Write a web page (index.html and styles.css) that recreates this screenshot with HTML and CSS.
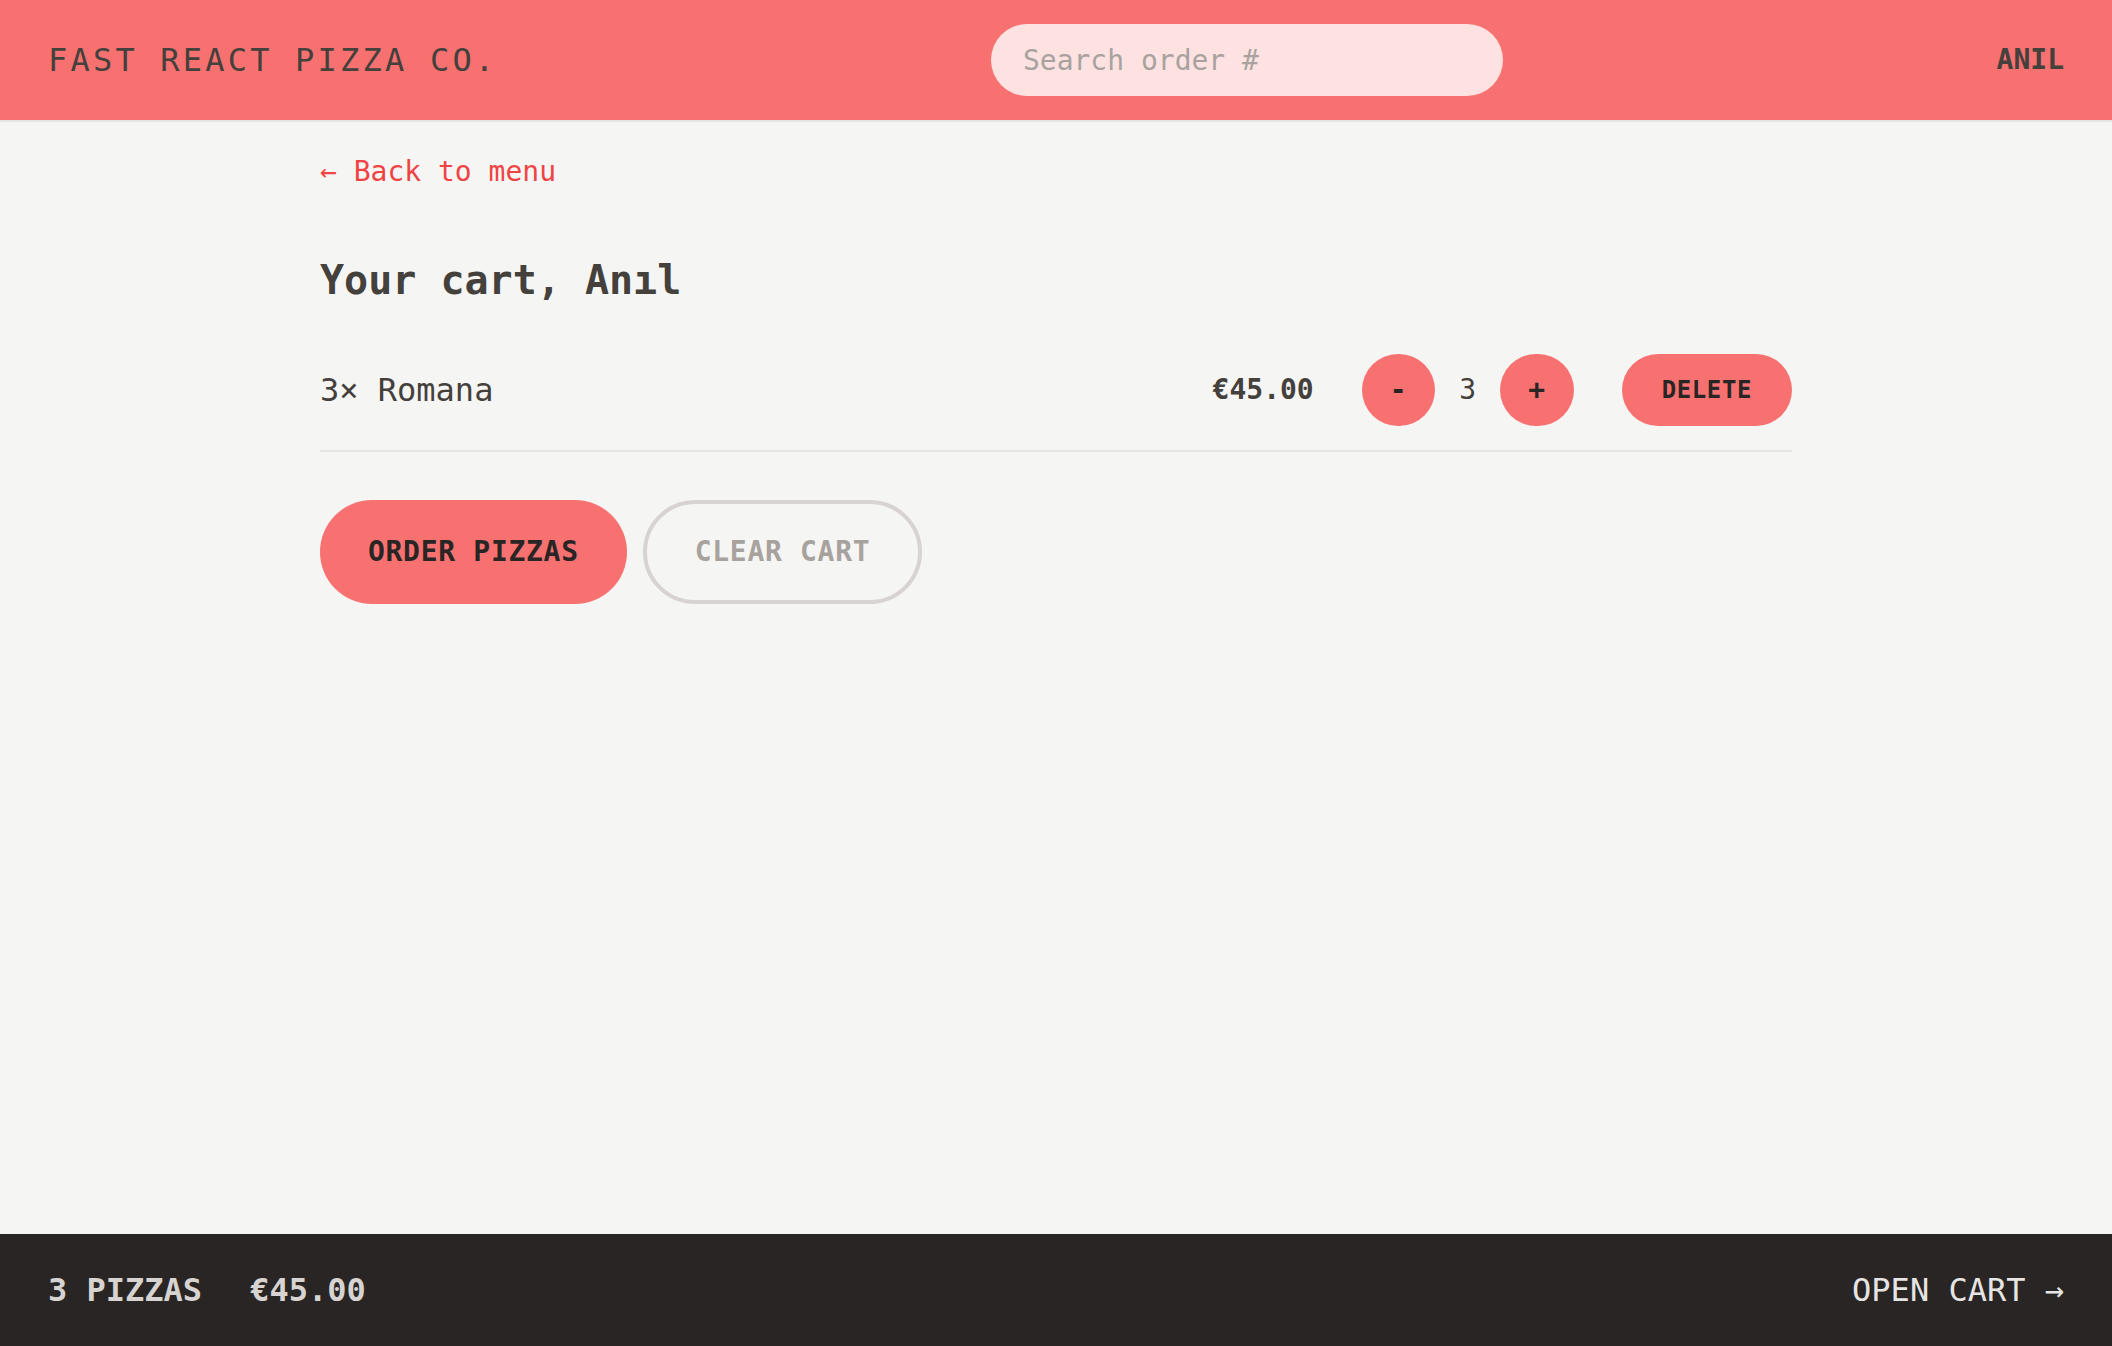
FILE: index.html
```html
<!DOCTYPE html>
<html lang="en">
<head>
<meta charset="utf-8">
<title>Fast React Pizza Co.</title>
<link rel="stylesheet" href="styles.css">
</head>
<body>
<div class="app">
  <header class="header">
    <a class="logo" href="#">Fast React Pizza Co.</a>
    <form class="search">
      <input class="search-input" type="text" placeholder="Search order #">
    </form>
    <div class="username">Anıl</div>
  </header>

  <div class="scroller">
    <main class="main">
      <div class="cart">
        <div class="back-row"><a class="link-button" href="#">&larr; Back to menu</a></div>
        <h2 class="cart-title">Your cart, Anıl</h2>
        <ul class="cart-list">
          <li class="cart-item">
            <p class="item-name">3&times; Romana</p>
            <div class="item-actions">
              <p class="item-price">€45.00</p>
              <div class="quantity">
                <button class="btn btn-round" type="button">-</button>
                <span class="qty">3</span>
                <button class="btn btn-round" type="button">+</button>
              </div>
              <button class="btn btn-small" type="button">Delete</button>
            </div>
          </li>
        </ul>
        <div class="cart-buttons">
          <a class="btn btn-primary" href="#">Order pizzas</a>
          <button class="btn btn-secondary" type="button">Clear cart</button>
        </div>
      </div>
    </main>
  </div>

  <footer class="overview">
    <p class="overview-stats"><span>3 pizzas</span><span>€45.00</span></p>
    <a class="overview-link" href="#">Open cart &rarr;</a>
  </footer>
</div>
</body>
</html>
```

FILE: styles.css
```css
* {
  box-sizing: border-box;
}

html, body {
  margin: 0;
  padding: 0;
}

body {
  font-family: "DejaVu Sans Mono", "Liberation Mono", monospace;
  font-size: 32px;
  line-height: 48px;
  background: #f5f5f4;
  color: #44403c;
}

p, h2, ul {
  margin: 0;
  padding: 0;
}

a {
  color: inherit;
  text-decoration: none;
}

.app {
  display: grid;
  grid-template-rows: auto 1fr auto;
  height: 100vh;
}

/* Header */
.header {
  display: flex;
  align-items: center;
  justify-content: space-between;
  background: #f87171;
  border-bottom: 2px solid #e7e5e4;
  padding: 24px 48px;
  text-transform: uppercase;
}

.logo {
  letter-spacing: 0.1em;
  font-size: 32px;
  line-height: 48px;
}

.search {
  margin: 0;
}

.search-input {
  display: block;
  width: 512px;
  height: 72px;
  border: none;
  outline: none;
  border-radius: 9999px;
  background: #fee2e2;
  padding: 16px 32px;
  font-family: inherit;
  font-size: 28px;
  line-height: 40px;
  color: #44403c;
}

.search-input::placeholder {
  color: #a8a29e;
}

.username {
  font-size: 28px;
  line-height: 40px;
  font-weight: 700;
}

/* Main */
.scroller {
  overflow: hidden;
}

.main {
  max-width: 1536px;
  margin: 0 auto;
}

.cart {
  padding: 24px 32px;
}

.back-row {
  line-height: 48px;
}

.link-button {
  font-size: 28px;
  color: #ef4444;
}

.cart-title {
  margin-top: 56px;
  font-size: 40px;
  line-height: 56px;
  font-weight: 700;
}

.cart-list {
  list-style: none;
  margin-top: 22px;
  border-bottom: 2px solid #e7e5e4;
}

.cart-item {
  display: flex;
  align-items: center;
  justify-content: space-between;
  padding: 24px 0;
}

.item-name {
  font-size: 32px;
  line-height: 48px;
}

.item-actions {
  display: flex;
  align-items: center;
  gap: 48px;
}

.item-price {
  font-size: 28px;
  line-height: 40px;
  font-weight: 700;
}

.quantity {
  display: flex;
  align-items: center;
  gap: 24px;
}

.qty {
  font-size: 28px;
  line-height: 40px;
  font-weight: 500;
}

/* Buttons */
.btn {
  display: inline-block;
  border: none;
  border-radius: 9999px;
  background: #f87171;
  color: #292524;
  font-family: inherit;
  font-size: 28px;
  line-height: 40px;
  font-weight: 700;
  text-transform: uppercase;
  letter-spacing: 0.025em;
  cursor: pointer;
  margin: 0;
}

.btn-round {
  padding: 16px 28px;
}

.btn-small {
  font-size: 24px;
  line-height: 32px;
  padding: 20px 40px;
}

.cart-buttons {
  display: flex;
  gap: 16px;
  margin-top: 48px;
}

.btn-primary {
  padding: 32px 48px;
}

.btn-secondary {
  background: transparent;
  border: 4px solid #d6d3d1;
  color: #a8a29e;
  padding: 28px 48px;
}

/* Footer */
.overview {
  display: flex;
  align-items: center;
  justify-content: space-between;
  background: #292524;
  color: #e7e5e4;
  padding: 32px 48px;
  text-transform: uppercase;
  font-size: 32px;
  line-height: 48px;
}

.overview-stats {
  display: flex;
  gap: 48px;
  font-weight: 700;
  color: #d6d3d1;
}
```
